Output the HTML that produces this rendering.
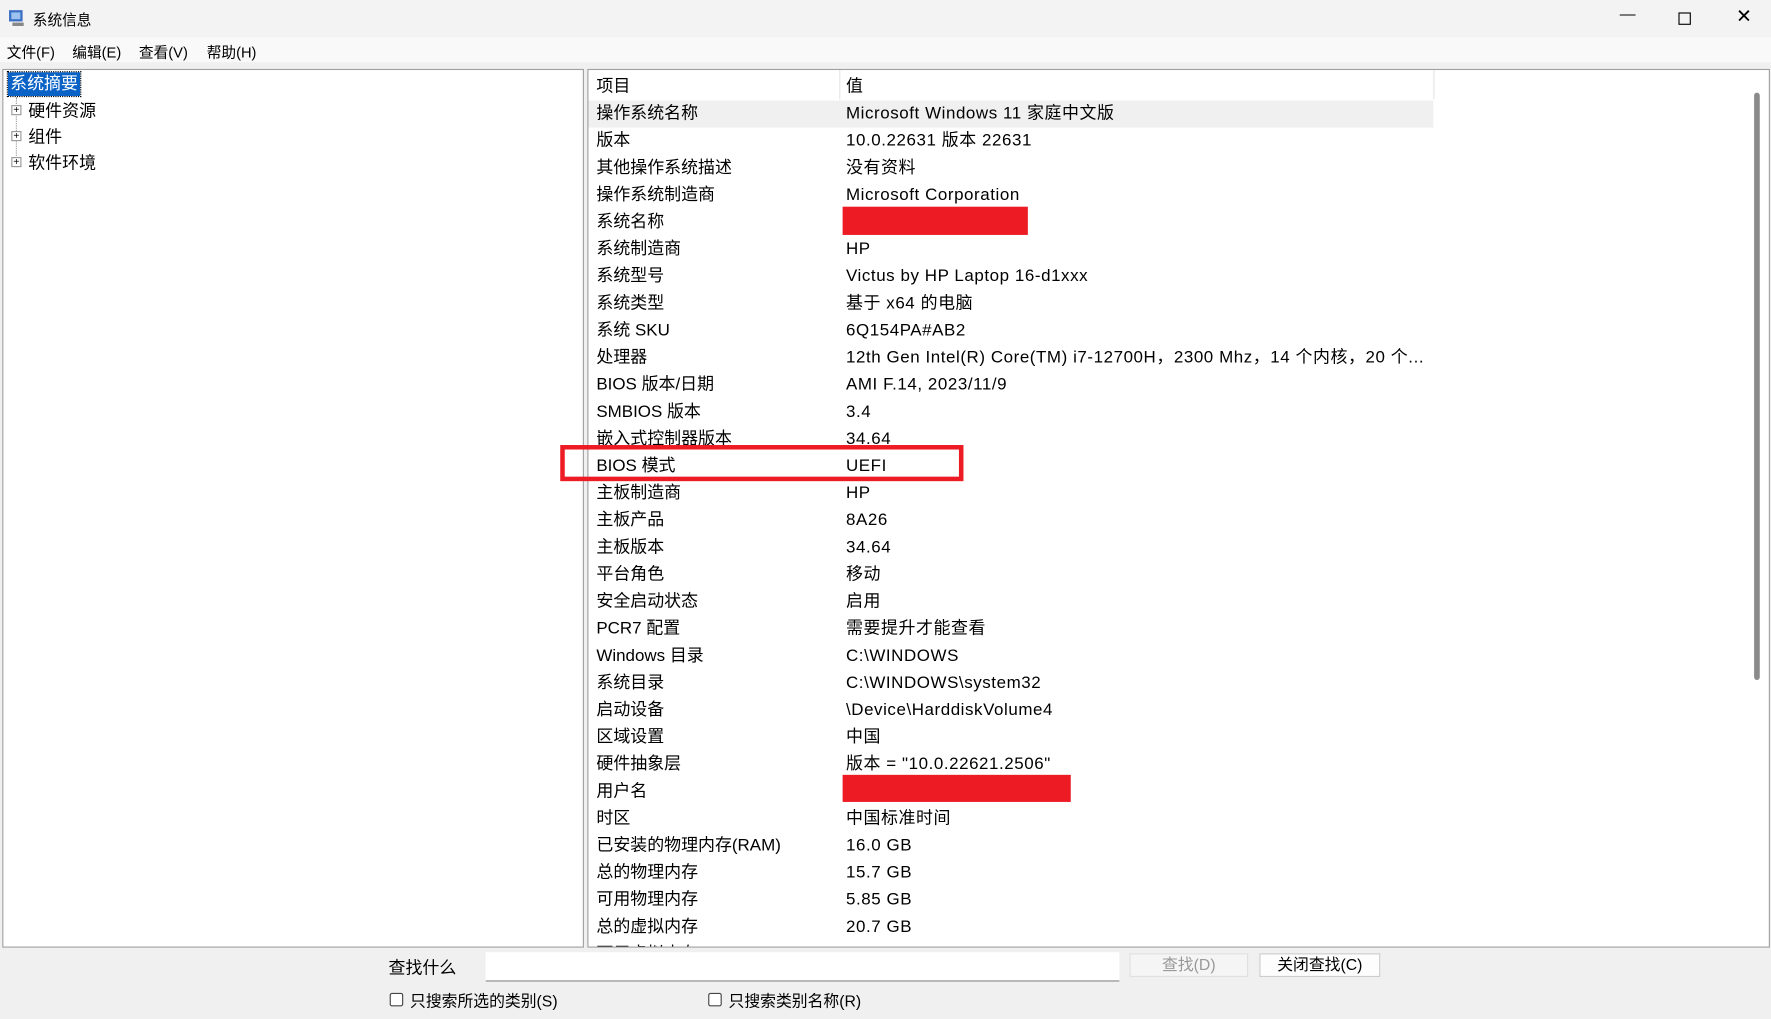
<!DOCTYPE html>
<html><head><meta charset="utf-8"><style>
*{margin:0;padding:0;box-sizing:border-box}
body{width:1771px;height:1019px;overflow:hidden;background:#f0f0f0;font-family:"Liberation Sans","Noto Sans CJK SC",sans-serif;color:#000}
#w{position:absolute;left:0;top:0;width:1568px;height:902px;transform:scale(1.1295);transform-origin:0 0;background:#f0f0f0}
.a{position:absolute;white-space:nowrap}
#title{left:0;top:0;width:1568px;height:33px;background:#f3f3f3}
#menu{left:0;top:33px;width:1568px;height:22px;background:#f9f9f9;font-size:13px}
#left{left:2px;top:61px;width:515px;height:778px;background:#fff;border:1px solid #a0a0a0}
#right{left:520px;top:61px;width:1047px;height:778px;background:#fff;border:1px solid #a0a0a0;overflow:hidden}
.r{position:absolute;left:0;height:24px;width:748px;font-size:15px;line-height:24px;margin-top:1px}
.r span{position:absolute}
.r .k{left:7px}.r .v{left:228px;letter-spacing:0.5px}
</style></head><body><div id="w">
<div id="title" class="a">
<svg class="a" style="left:7px;top:8px" width="16" height="16"><rect x="1" y="1" width="12" height="10" fill="#3a6fc4"/><rect x="3" y="3" width="8" height="6" fill="#9cc3f0"/><rect x="4" y="12" width="10" height="3" fill="#888"/></svg>
<span class="a" style="left:29px;top:7px;font-size:13px">系统信息</span>
<span class="a" style="left:1434px;top:4px;font-size:14px">—</span>
<div class="a" style="left:1486px;top:11px;width:11px;height:11px;border:1px solid #000"></div>
<span class="a" style="left:1537px;top:5px;font-size:17px">✕</span>
</div>
<div id="menu" class="a"><span class="a" style="left:6px;top:3px">文件(F)</span><span class="a" style="left:64px;top:3px">编辑(E)</span><span class="a" style="left:123px;top:3px">查看(V)</span><span class="a" style="left:183px;top:3px">帮助(H)</span></div>
<div id="left" class="a" style="font-size:15px">
<span class="a" style="left:4px;top:2px;background:#0a62c6;color:#fff;padding:0 2px;outline:1px dotted #000;line-height:21px">系统摘要</span>
<div class="a" style="left:11px;top:24px;height:62px;border-left:1px dotted #999"></div>
<span class="a" style="left:7px;top:31px;width:9px;height:9px;border:1px solid #999;background:#fff;font-size:9px;line-height:7px;text-align:center">+</span><span class="a" style="left:22px;top:25px">硬件资源</span>
<span class="a" style="left:7px;top:54px;width:9px;height:9px;border:1px solid #999;background:#fff;font-size:9px;line-height:7px;text-align:center">+</span><span class="a" style="left:22px;top:48px">组件</span>
<span class="a" style="left:7px;top:77px;width:9px;height:9px;border:1px solid #999;background:#fff;font-size:9px;line-height:7px;text-align:center">+</span><span class="a" style="left:22px;top:71px">软件环境</span>
</div>
<div id="right" class="a">
<div class="a" style="left:222px;top:0;width:1px;height:26px;background:#e5e5e5"></div>
<div class="a" style="left:748px;top:0;width:1px;height:26px;background:#e5e5e5"></div>
<div class="r" style="top:2px"><span class="k">项目</span><span class="v">值</span></div>
<div class="r" style="top:26px;background:#f0f0f0"><span class="k">操作系统名称</span><span class="v">Microsoft Windows 11 家庭中文版</span></div>
<div class="r" style="top:50px"><span class="k">版本</span><span class="v">10.0.22631 版本 22631</span></div>
<div class="r" style="top:74px"><span class="k">其他操作系统描述</span><span class="v">没有资料</span></div>
<div class="r" style="top:98px"><span class="k">操作系统制造商</span><span class="v">Microsoft Corporation</span></div>
<div class="r" style="top:122px"><span class="k">系统名称</span></div>
<div class="r" style="top:146px"><span class="k">系统制造商</span><span class="v">HP</span></div>
<div class="r" style="top:170px"><span class="k">系统型号</span><span class="v">Victus by HP Laptop 16-d1xxx</span></div>
<div class="r" style="top:194px"><span class="k">系统类型</span><span class="v">基于 x64 的电脑</span></div>
<div class="r" style="top:218px"><span class="k">系统 SKU</span><span class="v">6Q154PA#AB2</span></div>
<div class="r" style="top:242px"><span class="k">处理器</span><span class="v">12th Gen Intel(R) Core(TM) i7-12700H，2300 Mhz，14 个内核，20 个...</span></div>
<div class="r" style="top:266px"><span class="k">BIOS 版本/日期</span><span class="v">AMI F.14, 2023/11/9</span></div>
<div class="r" style="top:290px"><span class="k">SMBIOS 版本</span><span class="v">3.4</span></div>
<div class="r" style="top:314px"><span class="k">嵌入式控制器版本</span><span class="v">34.64</span></div>
<div class="r" style="top:338px"><span class="k">BIOS 模式</span><span class="v">UEFI</span></div>
<div class="r" style="top:362px"><span class="k">主板制造商</span><span class="v">HP</span></div>
<div class="r" style="top:386px"><span class="k">主板产品</span><span class="v">8A26</span></div>
<div class="r" style="top:410px"><span class="k">主板版本</span><span class="v">34.64</span></div>
<div class="r" style="top:434px"><span class="k">平台角色</span><span class="v">移动</span></div>
<div class="r" style="top:458px"><span class="k">安全启动状态</span><span class="v">启用</span></div>
<div class="r" style="top:482px"><span class="k">PCR7 配置</span><span class="v">需要提升才能查看</span></div>
<div class="r" style="top:506px"><span class="k">Windows 目录</span><span class="v">C:\WINDOWS</span></div>
<div class="r" style="top:530px"><span class="k">系统目录</span><span class="v">C:\WINDOWS\system32</span></div>
<div class="r" style="top:554px"><span class="k">启动设备</span><span class="v">\Device\HarddiskVolume4</span></div>
<div class="r" style="top:578px"><span class="k">区域设置</span><span class="v">中国</span></div>
<div class="r" style="top:602px"><span class="k">硬件抽象层</span><span class="v">版本 = "10.0.22621.2506"</span></div>
<div class="r" style="top:626px"><span class="k">用户名</span></div>
<div class="r" style="top:650px"><span class="k">时区</span><span class="v">中国标准时间</span></div>
<div class="r" style="top:674px"><span class="k">已安装的物理内存(RAM)</span><span class="v">16.0 GB</span></div>
<div class="r" style="top:698px"><span class="k">总的物理内存</span><span class="v">15.7 GB</span></div>
<div class="r" style="top:722px"><span class="k">可用物理内存</span><span class="v">5.85 GB</span></div>
<div class="r" style="top:746px"><span class="k">总的虚拟内存</span><span class="v">20.7 GB</span></div>
<div class="r" style="top:770px"><span class="k">可用虚拟内存</span><span class="v">4.92 GB</span></div>
<div class="a" style="left:1032px;top:20px;width:5px;height:520px;background:#8a8a8a;border-radius:3px"></div>
</div>
<div class="a" style="left:746px;top:183px;width:164px;height:25px;background:#ed1c24"></div>
<div class="a" style="left:746px;top:686px;width:202px;height:24px;background:#ed1c24"></div>
<div class="a" style="left:496px;top:394px;width:357px;height:32px;border:4px solid #ed1c24"></div>
<span class="a" style="left:344px;top:846px;font-size:15px">查找什么</span>
<div class="a" style="left:430px;top:843px;width:561px;height:26px;background:#fff;border-bottom:1px solid #888"></div>
<div class="a" style="left:1000px;top:844px;width:105px;height:21px;background:#f5f5f5;border:1px solid #e0e0e0;font-size:14px;color:#999;text-align:center;line-height:19px">查找(D)</div>
<div class="a" style="left:1115px;top:844px;width:107px;height:21px;background:#fdfdfd;border:1px solid #ccc;font-size:14px;text-align:center;line-height:19px">关闭查找(C)</div>
<div class="a" style="left:345px;top:879px;width:12px;height:12px;border:1px solid #444;background:#fff;border-radius:2px"></div>
<span class="a" style="left:363px;top:876px;font-size:14px">只搜索所选的类别(S)</span>
<div class="a" style="left:627px;top:879px;width:12px;height:12px;border:1px solid #444;background:#fff;border-radius:2px"></div>
<span class="a" style="left:645px;top:876px;font-size:14px">只搜索类别名称(R)</span>
</div></body></html>
